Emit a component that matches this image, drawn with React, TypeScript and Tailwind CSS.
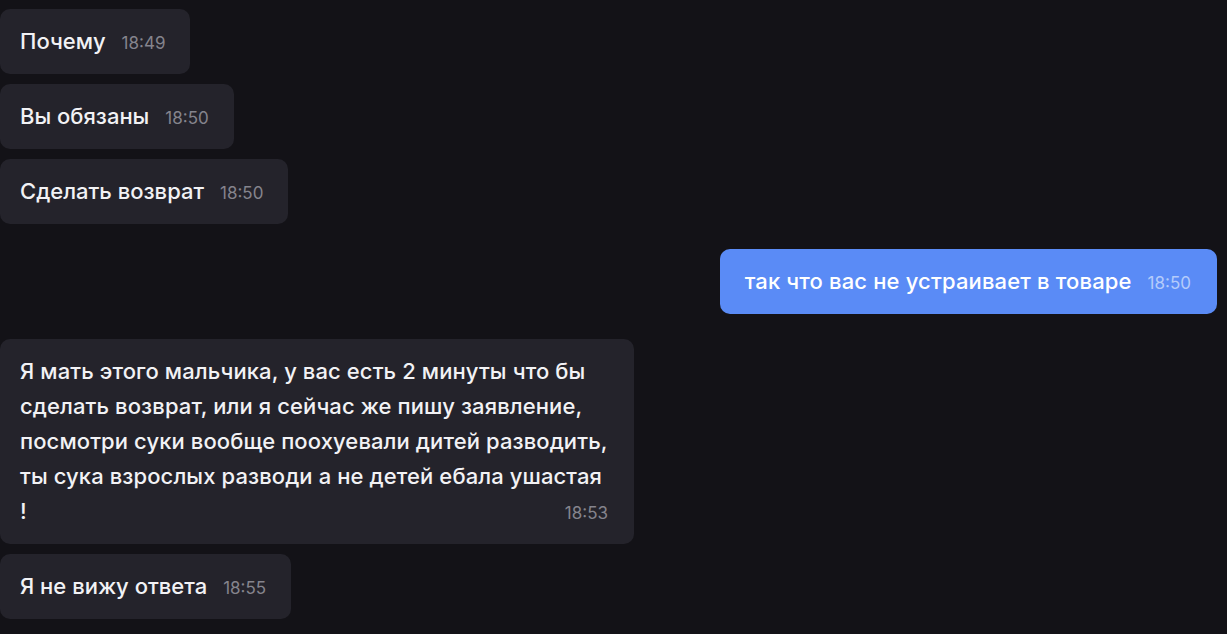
import React from 'react';

type Msg = {
  id: number;
  out?: boolean;
  lines: string[];
  time: string;
};

const messages: Msg[] = [
  { id: 1, lines: ['Почему'], time: '18:49' },
  { id: 2, lines: ['Вы обязаны'], time: '18:50' },
  { id: 3, lines: ['Сделать возврат'], time: '18:50' },
  { id: 4, out: true, lines: ['так что вас не устраивает в товаре'], time: '18:50' },
  {
    id: 5,
    lines: [
      'Я мать этого мальчика, у вас есть 2 минуты что бы',
      'сделать возврат, или я сейчас же пишу заявление,',
      'посмотри суки вообще поохуевали дитей разводить,',
      'ты сука взрослых разводи а не детей ебала ушастая',
      '!',
    ],
    time: '18:53',
  },
  { id: 6, lines: ['Я не вижу ответа'], time: '18:55' },
];

function Bubble({ msg }: { msg: Msg }) {
  const multi = msg.lines.length > 1;

  if (multi) {
    const last = msg.lines[msg.lines.length - 1];
    return (
      <div className="w-[634px] rounded-[10px] bg-[#24232b] pl-5 pr-[26px] py-[15px] text-[22px] font-medium leading-[35px] tracking-[0.1px] text-[#f2f2f5]">
        {msg.lines.slice(0, -1).map((l, i) => (
          <div key={i} className="whitespace-nowrap">{l}</div>
        ))}
        <div className="flex items-end justify-between">
          <span>{last}</span>
          <span className="text-[17px] font-normal leading-[31px] tracking-normal text-[#85848d]">{msg.time}</span>
        </div>
      </div>
    );
  }

  return (
    <div
      className={`flex items-end gap-4 rounded-[10px] py-[15px] text-[22px] font-medium leading-[35px] ${
        msg.out
          ? 'bg-[#5a8bf6] pl-[25px] pr-[26px] tracking-[0.15px] text-white'
          : 'bg-[#24232b] pl-5 pr-[25px] text-[#f2f2f5]'
      }`}
    >
      <span className="whitespace-nowrap">{msg.lines[0]}</span>
      <span
        className={`text-[17px] font-normal leading-[31px] tracking-normal ${
          msg.out ? 'text-[#b4cbfb]' : 'text-[#85848d]'
        }`}
      >
        {msg.time}
      </span>
    </div>
  );
}

export default function App() {
  return (
    <div
      className="h-[634px] w-[1227px] overflow-hidden bg-[#131217] pt-[9px] pr-[10px]"
      style={{ fontFamily: 'Inter, "Noto Sans", sans-serif' }}
    >
      <div className="flex flex-col gap-[10px]">
        {messages.map(m => (
          <div key={m.id} className={`flex ${m.out ? 'justify-end my-[15px]' : 'justify-start'}`}>
            <Bubble msg={m} />
          </div>
        ))}
      </div>
    </div>
  );
}
